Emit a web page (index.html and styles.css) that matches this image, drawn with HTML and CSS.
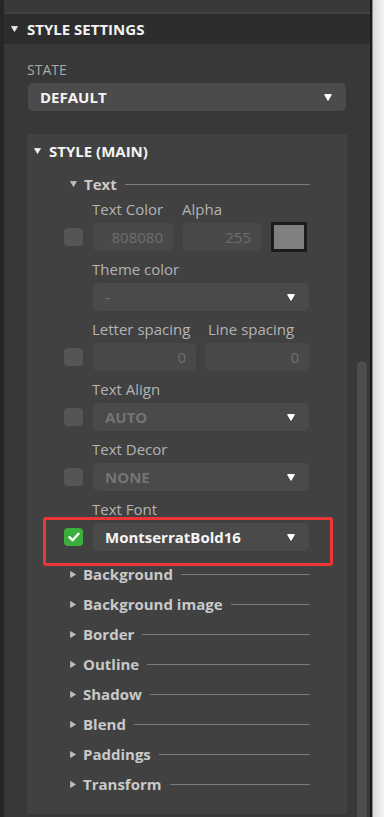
FILE: index.html
```html
<!DOCTYPE html>
<html>
<head>
<meta charset="utf-8">
<link rel="stylesheet" href="styles.css">
</head>
<body>
<div class="app">
  <div class="lstrip"></div>
  <div class="panel">
    <div class="topgap"></div>
    <div class="sechead">
      <svg class="tri" width="7" height="6" viewBox="0 0 7 6"><path d="M0.5 0.5H6.5L3.5 5.5Z" fill="#e8e8e8" stroke="#e8e8e8" stroke-width="0.8" stroke-linejoin="round"/></svg>
      <span>STYLE SETTINGS</span>
    </div>
    <div class="pbody">
      <div class="content">
        <div class="state-label">STATE</div>
        <div class="dd dd-state"><span>DEFAULT</span><svg class="arr" width="8" height="7" viewBox="0 0 8 7"><path d="M0.6 0.6H7.4L4 6.4Z" fill="#fff" stroke="#fff" stroke-width="1" stroke-linejoin="round"/></svg></div>

        <div class="card">
          <div class="card-head">
            <svg width="7" height="6" viewBox="0 0 7 6"><path d="M0.5 0.5H6.5L3.5 5.5Z" fill="#f0f0f0" stroke="#f0f0f0" stroke-width="0.8" stroke-linejoin="round"/></svg>
            <span>STYLE (MAIN)</span>
          </div>

          <div class="ghead">
            <svg width="7" height="6" viewBox="0 0 7 6"><path d="M0.5 0.5H6.5L3.5 5.5Z" fill="#bdbdbd" stroke="#bdbdbd" stroke-width="0.8" stroke-linejoin="round"/></svg>
            <span class="gtitle">Text</span><i class="rule"></i>
          </div>

          <div class="field">
            <div class="labels"><span class="lb-color">Text Color</span><span>Alpha</span></div>
            <div class="row">
              <span class="cb"></span>
              <div class="ctrls">
                <div class="inp inp-color">808080</div>
                <div class="inp inp-alpha">255</div>
                <div class="swatch"><div class="swatch-in"></div></div>
              </div>
            </div>
          </div>

          <div class="field">
            <div class="labels"><span>Theme color</span></div>
            <div class="row">
              <span class="cb-space"></span>
              <div class="dd dd-field"><span class="dim">-</span><svg class="arr" width="8" height="7" viewBox="0 0 8 7"><path d="M0.6 0.6H7.4L4 6.4Z" fill="#fff" stroke="#fff" stroke-width="1" stroke-linejoin="round"/></svg></div>
            </div>
          </div>

          <div class="field">
            <div class="labels"><span class="lb-letter">Letter spacing</span><span>Line spacing</span></div>
            <div class="row">
              <span class="cb"></span>
              <div class="ctrls">
                <div class="inp inp-half">0</div>
                <div class="inp inp-half2">0</div>
              </div>
            </div>
          </div>

          <div class="field">
            <div class="labels"><span>Text Align</span></div>
            <div class="row">
              <span class="cb"></span>
              <div class="dd dd-field"><span class="dimb">AUTO</span><svg class="arr" width="8" height="7" viewBox="0 0 8 7"><path d="M0.6 0.6H7.4L4 6.4Z" fill="#fff" stroke="#fff" stroke-width="1" stroke-linejoin="round"/></svg></div>
            </div>
          </div>

          <div class="field">
            <div class="labels"><span>Text Decor</span></div>
            <div class="row">
              <span class="cb"></span>
              <div class="dd dd-field"><span class="dimb">NONE</span><svg class="arr" width="8" height="7" viewBox="0 0 8 7"><path d="M0.6 0.6H7.4L4 6.4Z" fill="#fff" stroke="#fff" stroke-width="1" stroke-linejoin="round"/></svg></div>
            </div>
          </div>

          <div class="field field-hl">
            <div class="labels"><span>Text Font</span></div>
            <div class="row">
              <span class="cb cb-on"><svg width="12" height="10" viewBox="0 0 12 10"><path d="M1.5 5.2L4.6 8.2L10.5 1.8" fill="none" stroke="#fff" stroke-width="2.4" stroke-linecap="round" stroke-linejoin="round"/></svg></span>
              <div class="dd dd-field"><span class="val">MontserratBold16</span><svg class="arr" width="8" height="7" viewBox="0 0 8 7"><path d="M0.6 0.6H7.4L4 6.4Z" fill="#fff" stroke="#fff" stroke-width="1" stroke-linejoin="round"/></svg></div>
            </div>
            <div class="highlight"></div>
          </div>

          <div class="ghead ghead-first">
            <svg width="6" height="7" viewBox="0 0 6 7"><path d="M0.5 0.5V6.5L5.5 3.5Z" fill="#bdbdbd" stroke="#bdbdbd" stroke-width="0.8" stroke-linejoin="round"/></svg>
            <span class="gtitle">Background</span><i class="rule"></i>
          </div>
          <div class="ghead">
            <svg width="6" height="7" viewBox="0 0 6 7"><path d="M0.5 0.5V6.5L5.5 3.5Z" fill="#bdbdbd" stroke="#bdbdbd" stroke-width="0.8" stroke-linejoin="round"/></svg>
            <span class="gtitle">Background image</span><i class="rule"></i>
          </div>
          <div class="ghead">
            <svg width="6" height="7" viewBox="0 0 6 7"><path d="M0.5 0.5V6.5L5.5 3.5Z" fill="#bdbdbd" stroke="#bdbdbd" stroke-width="0.8" stroke-linejoin="round"/></svg>
            <span class="gtitle">Border</span><i class="rule"></i>
          </div>
          <div class="ghead">
            <svg width="6" height="7" viewBox="0 0 6 7"><path d="M0.5 0.5V6.5L5.5 3.5Z" fill="#bdbdbd" stroke="#bdbdbd" stroke-width="0.8" stroke-linejoin="round"/></svg>
            <span class="gtitle">Outline</span><i class="rule"></i>
          </div>
          <div class="ghead">
            <svg width="6" height="7" viewBox="0 0 6 7"><path d="M0.5 0.5V6.5L5.5 3.5Z" fill="#bdbdbd" stroke="#bdbdbd" stroke-width="0.8" stroke-linejoin="round"/></svg>
            <span class="gtitle">Shadow</span><i class="rule"></i>
          </div>
          <div class="ghead">
            <svg width="6" height="7" viewBox="0 0 6 7"><path d="M0.5 0.5V6.5L5.5 3.5Z" fill="#bdbdbd" stroke="#bdbdbd" stroke-width="0.8" stroke-linejoin="round"/></svg>
            <span class="gtitle">Blend</span><i class="rule"></i>
          </div>
          <div class="ghead">
            <svg width="6" height="7" viewBox="0 0 6 7"><path d="M0.5 0.5V6.5L5.5 3.5Z" fill="#bdbdbd" stroke="#bdbdbd" stroke-width="0.8" stroke-linejoin="round"/></svg>
            <span class="gtitle">Paddings</span><i class="rule"></i>
          </div>
          <div class="ghead">
            <svg width="6" height="7" viewBox="0 0 6 7"><path d="M0.5 0.5V6.5L5.5 3.5Z" fill="#bdbdbd" stroke="#bdbdbd" stroke-width="0.8" stroke-linejoin="round"/></svg>
            <span class="gtitle">Transform</span><i class="rule"></i>
          </div>
        </div>
      </div>
      <div class="scroll"><div class="thumb"></div></div>
    </div>
  </div>
  <div class="rborder"></div>
  <div class="outside"></div>
</div>
</body>
</html>
```

FILE: styles.css
```css
html, body {
  margin: 0;
  padding: 0;
}
body {
  width: 384px;
  height: 817px;
  overflow: hidden;
  background: #383838;
  font-family: "Open Sans", "Liberation Sans", sans-serif;
  font-size: 15px;
}
.app {
  display: flex;
  height: 817px;
  overflow: hidden;
}
.lstrip {
  width: 4px;
  background: #262626;
}
.panel {
  width: 366px;
  height: 817px;
  background: #383838;
  display: flex;
  flex-direction: column;
  overflow: hidden;
}
.topgap {
  height: 12px;
  background: #393939;
  border-bottom: 2px solid #414141;
}
.sechead {
  height: 30px;
  padding-left: 7px;
  display: flex;
  align-items: center;
  gap: 9px;
  background: #2d2d2d;
  color: #f2f2f2;
  font-weight: 700;
  font-size: 15px;
}
.pbody {
  display: flex;
  flex: 1;
  padding: 0 3px 0 23px;
  gap: 10px;
  min-height: 0;
}
.content {
  width: 320px;
  display: flex;
  flex-direction: column;
}
.scroll {
  width: 10px;
}
.thumb {
  margin-top: 317px;
  height: 456px;
  background: #4d4d4d;
  border-radius: 5px 5px 0 0;
}
.rborder {
  width: 2px;
  background: #1b1b1b;
}
.outside {
  flex: 1;
  background: linear-gradient(to right, #8a8a8a 0, #8a8a8a 1px, #d9d9d9 1px, #f3f3f3 100%);
}

.state-label {
  margin-top: 16px;
  line-height: 20px;
  font-size: 14px;
  color: #a9a9a9;
}
.dd {
  height: 28px;
  border-radius: 5px;
  background: #4b4b4b;
  display: flex;
  align-items: center;
  justify-content: space-between;
  padding: 0 14px 0 12px;
  box-sizing: border-box;
  font-weight: 700;
  font-size: 15px;
  color: #f4f4f4;
}
.dd-state {
  margin: 3px 1px 0 1px;
}
.dd-field {
  width: 216px;
  background: #4a4a4a;
}
.dim {
  font-weight: 400;
  color: #7a7a7a;
}
.dimb {
  color: #747474;
}
.val {
  color: #f6f6f6;
}

.card {
  margin-top: 23px;
  background: #414141;
  padding: 6px 37px 14px 37px;
  height: 680px;
  box-sizing: border-box;
}
.card-head {
  margin-left: -30px;
  height: 22px;
  display: flex;
  align-items: center;
  gap: 8px;
  font-weight: 700;
  font-size: 15px;
  color: #f4f4f4;
}
.ghead {
  margin-left: 6px;
  height: 30px;
  display: flex;
  align-items: center;
  color: #c9c9c9;
  font-weight: 700;
  font-size: 15px;
}
.card-head + .ghead {
  margin-top: 7px;
}
.ghead-first {
  margin-top: 8px;
}
.ghead svg {
  margin-right: 7px;
}
.rule {
  flex: 1;
  height: 1px;
  background: #7c7c7c;
  margin-left: 8px;
}

.field {
  position: relative;
  margin-bottom: 8px;
}
.field-hl {
  margin-bottom: 0;
}
.labels {
  display: flex;
  margin-left: 28px;
  height: 20px;
  line-height: 20px;
  font-size: 15px;
  color: #b3b3b3;
}
.lb-color {
  width: 90px;
}
.lb-letter {
  width: 116px;
}
.row {
  margin-top: 4px;
  height: 28px;
  display: flex;
  align-items: center;
  gap: 10px;
}
.cb {
  width: 19px;
  height: 18px;
  border-radius: 4px;
  background: #555555;
  display: flex;
  align-items: center;
  justify-content: center;
}
.cb-space {
  width: 19px;
}
.cb-on {
  background: #3aaf3d;
}
.ctrls {
  display: flex;
  align-items: center;
  gap: 10px;
}
.inp {
  height: 28px;
  border-radius: 5px;
  background: #494949;
  color: #6e6e6e;
  font-size: 15px;
  line-height: 28px;
  text-align: right;
  padding-right: 10px;
  box-sizing: border-box;
}
.inp-color {
  width: 80px;
}
.inp-alpha {
  width: 78px;
}
.inp-half {
  width: 103px;
}
.inp-half2 {
  width: 104px;
  margin-left: -1px;
}
.swatch {
  width: 36px;
  height: 30px;
  background: #1c1c1c;
  padding: 3px;
  box-sizing: border-box;
}
.swatch-in {
  width: 100%;
  height: 100%;
  background: #808080;
}
.highlight {
  position: absolute;
  left: -21px;
  top: 18px;
  width: 290px;
  height: 49px;
  border: 3px solid #ee3535;
  border-radius: 3px;
  box-sizing: border-box;
}
```
